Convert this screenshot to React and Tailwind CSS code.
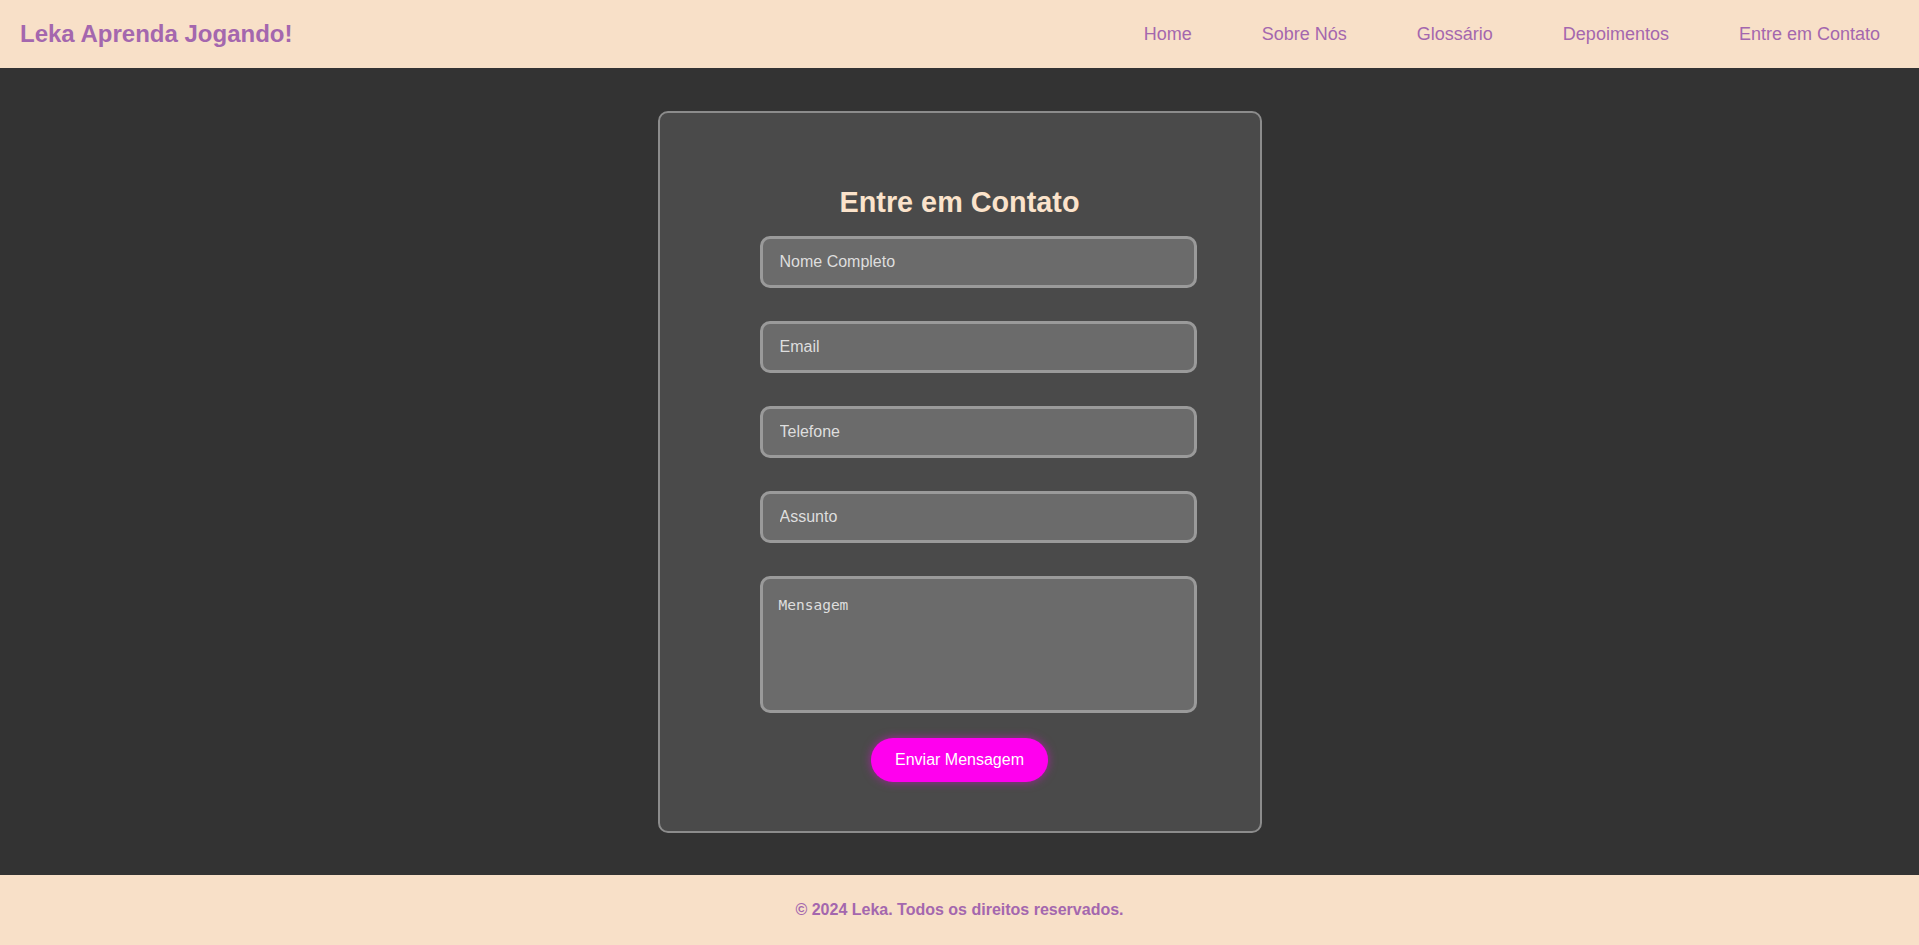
const NAV = ['Home', 'Sobre Nós', 'Glossário', 'Depoimentos', 'Entre em Contato'];

const FIELDS = [
  { type: 'text', placeholder: 'Nome Completo' },
  { type: 'email', placeholder: 'Email' },
  { type: 'tel', placeholder: 'Telefone' },
  { type: 'text', placeholder: 'Assunto' },
];

export default function App() {
  return (
    <div className="min-h-screen flex flex-col bg-[#333333] font-['Liberation_Sans',Arial,sans-serif]">

      {/* Header */}
      <header className="h-[68px] bg-[#f8e0c8] flex items-center justify-between pl-[20px] pr-[39px]">
        <h1 className="text-[24px] font-bold text-[#a467ae]">Leka Aprenda Jogando!</h1>
        <nav className="flex items-center gap-[70px]">
          {NAV.map((item) => (
            <a key={item} href="#" className="text-[18px] text-[#a467ae]">
              {item}
            </a>
          ))}
        </nav>
      </header>

      {/* Contact form */}
      <main className="flex justify-center pt-[43px] pb-[42px]">
        <div className="w-[604px] h-[722px] bg-[#4a4a4a] border-2 border-[#8c8c8c] rounded-[10px] flex justify-center pt-[73px]">
          <form className="w-[400px] flex flex-col items-start" onSubmit={(e) => e.preventDefault()}>
            <h2 className="w-full text-center text-[28.8px] leading-[33px] font-bold text-[#fbe3cb] mb-[17px]">
              Entre em Contato
            </h2>
            {FIELDS.map(({ type, placeholder }) => (
              <input
                key={placeholder}
                type={type}
                placeholder={placeholder}
                className="w-[437px] h-[52px] mb-[33px] shrink-0 bg-[#6b6b6b] border-[3px] border-[#9a9a9a] rounded-[10px] px-[17px] text-[16px] text-white placeholder:text-[#dedede] outline-none"
              />
            ))}
            <textarea
              placeholder="Mensagem"
              className="w-[437px] h-[137px] shrink-0 bg-[#6b6b6b] border-[3px] border-[#9a9a9a] rounded-[10px] px-[16px] pt-[16px] resize-none font-['DejaVu_Sans_Mono',monospace] text-[14.5px] text-white placeholder:text-[#dedede] outline-none"
            />
            <button
              type="submit"
              className="self-center mt-[25px] h-[44px] px-[24px] rounded-full bg-[#ff00ee] text-white text-[16px] shadow-[0_0_10px_rgba(255,0,238,0.5)]"
            >
              Enviar Mensagem
            </button>
          </form>
        </div>
      </main>

      {/* Footer */}
      <footer className="h-[70px] bg-[#f8e0c8] flex items-center justify-center">
        <p className="text-[16px] font-bold text-[#a467ae]">© 2024 Leka. Todos os direitos reservados.</p>
      </footer>
    </div>
  );
}
